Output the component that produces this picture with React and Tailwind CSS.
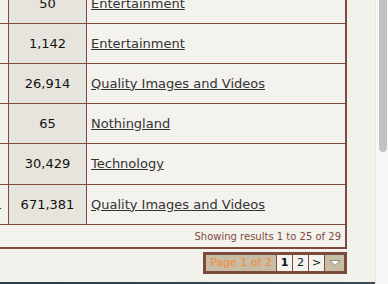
const rows = [
  { lead: '', count: '50', category: 'Entertainment', h: 'h-[40px]' },
  { lead: '', count: '1,142', category: 'Entertainment', h: 'h-[40px]' },
  { lead: '', count: '26,914', category: 'Quality Images and Videos', h: 'h-[40px]' },
  { lead: '', count: '65', category: 'Nothingland', h: 'h-[40px]' },
  { lead: '', count: '30,429', category: 'Technology', h: 'h-[41px]' },
  { lead: '1', count: '671,381', category: 'Quality Images and Videos', h: 'h-[40px]' },
];

const ResultsTable = () => (
  <div className="ml-[-52px] mt-[-16px] w-[399px] border-r-2 border-[#7d4b3d]">
    {rows.map((row, i) => (
      <div key={i} className={`flex ${row.h} border-b border-[#7d4b3d]`}>
        <div className="flex w-[61px] items-center justify-end border-r border-[#7d4b3d] pr-[6px] text-[13px] text-[#111]">
          {row.lead}
        </div>
        <div className="flex w-[78px] items-center justify-center border-r border-[#7d4b3d] bg-[#e6e4dc] text-[13px] text-[#111]">
          {row.count}
        </div>
        <div className="flex flex-1 items-center bg-[#f3f2ee] pl-[4px] text-[13px]">
          <a href="#" className="text-[#333] underline">{row.category}</a>
        </div>
      </div>
    ))}
    <div className="flex h-[24px] items-center justify-end border-b-2 border-[#7d4b3d] bg-[#f3f2ee] pr-[4px] text-[10px] text-[#7e4c3c]">
      Showing results 1 to 25 of 29
    </div>
  </div>
);

const Pagination = () => (
  <div className="mt-[3px] flex justify-end pr-[28px]">
    <div className="flex h-[22px] border-[3px] border-[#7d4b3d] text-[11px] leading-[16px]">
      <div className="w-[70px] bg-[#c7bca4] text-center text-[#f28c3a]">Page 1 of 2</div>
      <div className="w-[16px] border-l border-[#7d4b3d] bg-[#f4f3ef] text-center font-bold text-[#111]">1</div>
      <div className="w-[16px] border-l border-[#7d4b3d] bg-[#f4f3ef] text-center text-[#111]">2</div>
      <div className="w-[16px] border-l border-[#7d4b3d] bg-[#f4f3ef] text-center text-[#111]">&gt;</div>
      <div className="flex w-[20px] items-center justify-center border-l border-[#7d4b3d] bg-[#c7bca4]">
        <svg width="12" height="8" viewBox="0 0 12 8">
          <path d="M1 1.5 L11 1.5 L6 6.5 Z" fill="#ffffff" stroke="#8a8a8a" strokeWidth="1" strokeLinejoin="round" />
        </svg>
      </div>
    </div>
  </div>
);

export default function App() {
  return (
    <div className="flex h-[284px] w-[388px] overflow-hidden bg-[#f2f1ec] font-['DejaVu_Sans',Verdana,sans-serif]">
      <div className="flex w-[375px] flex-col overflow-hidden">
        <ResultsTable />
        <Pagination />
        <div className="mt-auto h-[2px] bg-gradient-to-r from-[#2c3b4c] to-[#3a4b5c]" />
      </div>
      <div className="w-[13px] border-l border-[#e6e6e6] bg-[#f8f8f8]">
        <div className="ml-[3px] mt-[-10px] h-[162px] w-[8px] rounded-full bg-[#c2c2c2]" />
      </div>
    </div>
  );
}
